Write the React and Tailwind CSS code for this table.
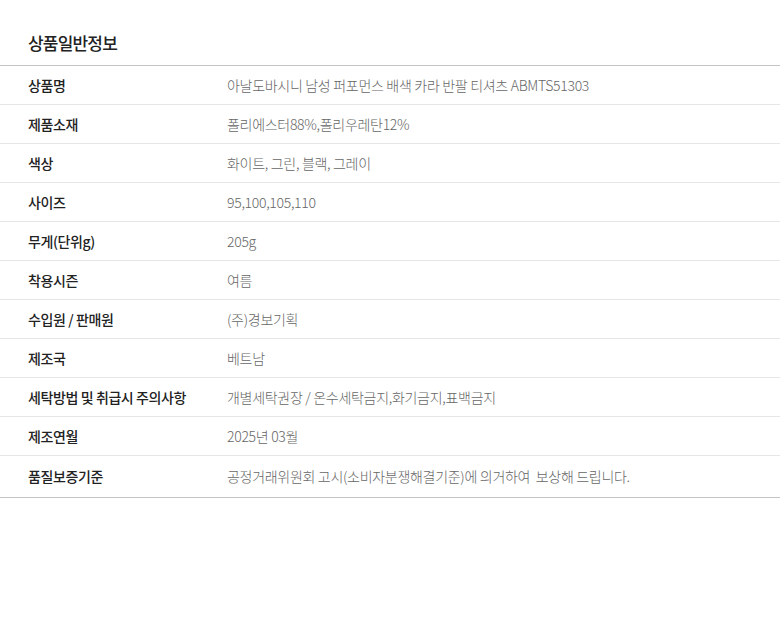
import React from 'react';

const rows = [
  ['상품명', '아날도바시니 남성 퍼포먼스 배색 카라 반팔 티셔츠 ABMTS51303'],
  ['제품소재', '폴리에스터88%,폴리우레탄12%'],
  ['색상', '화이트, 그린, 블랙, 그레이'],
  ['사이즈', '95,100,105,110'],
  ['무게(단위g)', '205g'],
  ['착용시즌', '여름'],
  ['수입원 / 판매원', '(주)경보기획'],
  ['제조국', '베트남'],
  ['세탁방법 및 취급시 주의사항', '개별세탁권장 / 온수세탁금지,화기금지,표백금지'],
  ['제조연월', '2025년 03월'],
  ['품질보증기준', '공정거래위원회 고시(소비자분쟁해결기준)에 의거하여  보상해 드립니다.'],
];

export default function App() {
  return (
    <div
      className="w-[780px] h-[635px] bg-white"
      style={{ fontFamily: '"Noto Sans CJK KR", "Noto Sans", sans-serif' }}
    >
      {/* Title */}
      <div className="h-[65px] px-[28px] pt-[30px]">
        <h3 className="text-[17px] leading-[26px] font-medium text-[#222] tracking-[-0.8px]">상품일반정보</h3>
      </div>

      {/* Table */}
      <div className="border-t border-b border-[#c4c4c4]">
        {rows.map(([label, value], i) => (
          <div
            key={i}
            className={`flex items-center ${i === rows.length - 1 ? 'h-[41px]' : 'h-[39px] border-b border-[#e6e6e6]'}`}
          >
            <div className="w-[227px] pl-[28px] text-[14px] font-medium text-[#222] tracking-[-0.4px] whitespace-pre">
              {label}
            </div>
            <div className="flex-1 text-[14px] font-light text-[#666] tracking-[-0.3px] whitespace-pre">
              {value}
            </div>
          </div>
        ))}
      </div>
    </div>
  );
}
